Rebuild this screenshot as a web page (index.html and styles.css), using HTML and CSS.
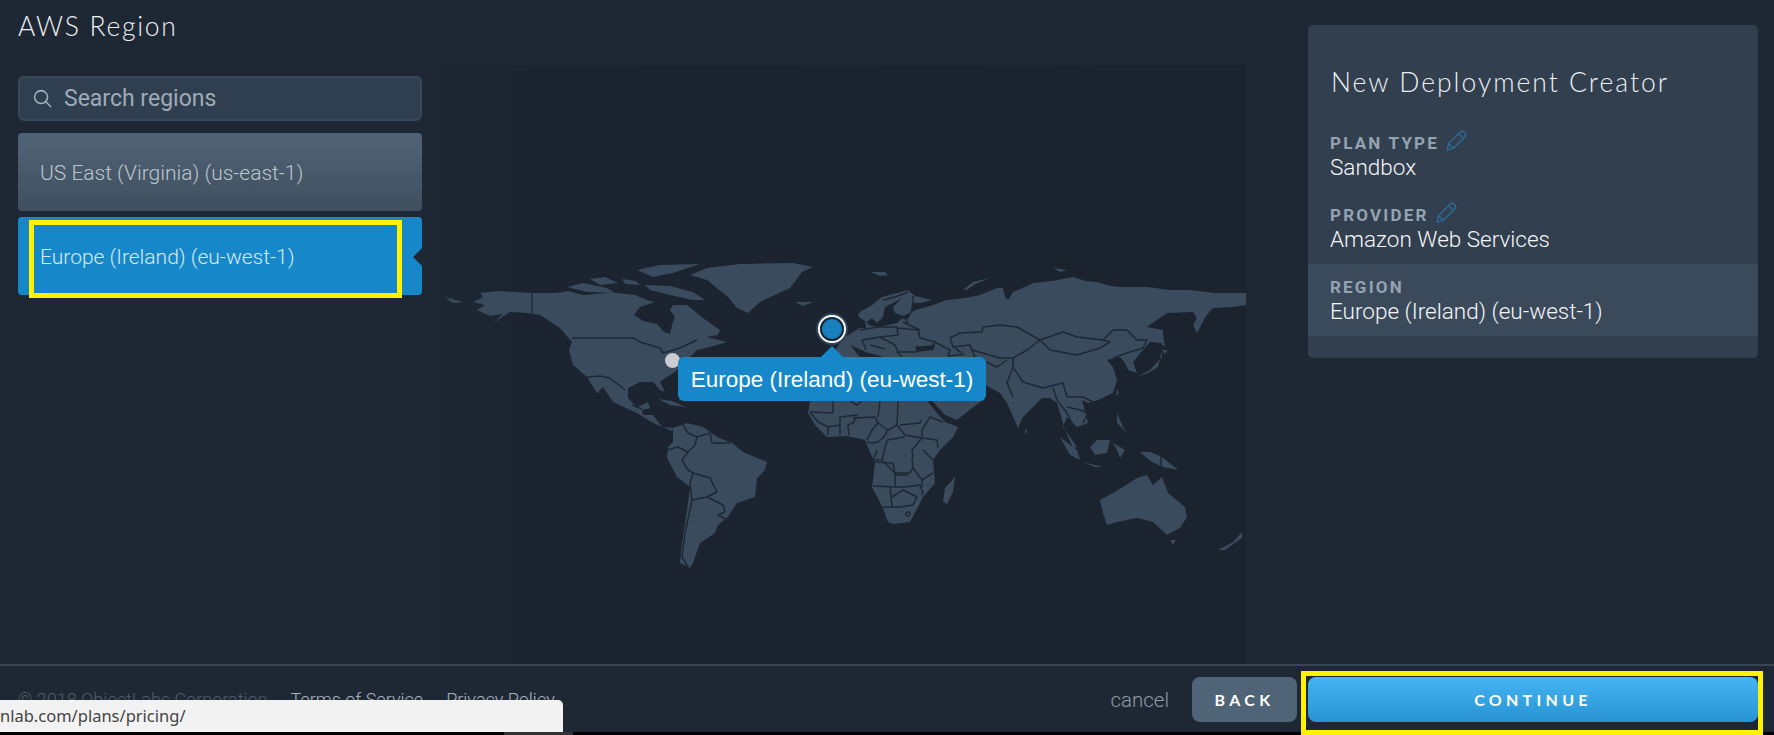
FILE: index.html
```html
<!DOCTYPE html>
<html lang="en">
<head>
    <meta charset="UTF-8">
    <meta name="viewport" content="width=device-width, initial-scale=1.0">
    <title>AWS Region</title>
    <link rel="stylesheet" href="styles.css">
</head>
<body>
    <div class="page">
        <main class="main">
            <section class="regions">
                <h1 class="regions-title">AWS Region</h1>
                <div class="search">
                    <svg class="search-icon" viewBox="0 0 20 20"><circle cx="8.5" cy="8.5" r="6.8"/><path d="M13.5 13.5L19 19"/></svg>
                    <span>Search regions</span>
                </div>
                <div class="region-item">US East (Virginia) (us-east-1)</div>
                <div class="region-item region-item-active">Europe (Ireland) (eu-west-1)</div>
            </section>

            <section class="map">
                <svg class="map-svg" viewBox="430 65 816 600">
                    <g class="land">
                        <!-- north america -->
                        <path d="M473 302L483 297L480 293L498 291L532 293L557 293L568 291L583 295L607 293L617 293L635 295L647 300L655 302L640 307L634 315L643 321L657 324L664 332L670 334L672 325L675 317L670 310L673 305L687 305L703 318L720 330L718 335L707 337L727 342L710 347L697 350L690 357L675 372L667 377L660 382L665 392L660 390L653 382L640 382L628 388L628 398L637 407L648 402L650 408L642 410L643 415L653 415L662 427L673 428L672 431L653 423L637 413L613 402L603 387L597 393L587 377L573 365L569 350L572 342L560 328L540 315L528 313L510 312L493 323L503 314L490 316L477 310L485 305Z"/>
                        <path d="M445 297L463 302L453 303Z"/>
                        <path d="M645 285L670 286L693 292L705 300L693 300L670 295L650 290Z"/>
                        <path d="M567 287L583 283L607 288L615 293L587 292Z"/>
                        <path d="M637 270L660 265L700 264L673 273L653 277Z"/>
                        <path d="M622 279L636 281L640 285L625 284Z"/>
                        <path d="M590 279L605 277L618 283L600 285Z"/>
                        <path d="M658 399L672 401L686 407L670 405Z"/>
                        <!-- greenland, iceland -->
                        <path d="M690 275L707 268L740 264L793 263L813 267L802 272L790 288L760 302L748 313L737 308L728 297L707 280Z"/>
                        <path d="M795 302L813 302L803 306Z"/>
                        <!-- south america -->
                        <path d="M673 428L687 423L703 427L717 437L732 443L743 452L767 462L765 470L757 478L755 497L737 503L727 518L718 525L715 533L700 543L693 563L690 568L680 563L682 543L688 503L690 487L677 477L667 458L668 447L673 442Z"/>
                        <!-- eurasia -->
                        <path d="M826 372L830 358L843 338L860 328L866 328L865 320L869 325L878 327L897 323L902 318L908 319L911 313L915 310L930 306L947 300L965 298L980 295L997 288L1003 288L1005 297L1008 300L1013 292L1025 287L1033 283L1052 281L1073 277L1085 281L1097 282L1110 286L1120 287L1147 287L1170 290L1190 290L1215 293L1230 293L1246 293L1246 305L1233 307L1213 308L1206 316L1197 333L1193 325L1197 318L1193 312L1167 313L1147 327L1163 330L1162 343L1150 342L1143 350L1133 362L1137 373L1128 370L1125 363L1120 357L1107 360L1113 367L1117 380L1113 393L1098 400L1088 403L1082 400L1088 423L1077 427L1067 417L1063 427L1077 447L1073 448L1065 430L1057 403L1050 398L1042 398L1023 417L1018 428L1007 403L1000 393L985 385L960 370L900 372Z"/>
                        <!-- scandinavia, finland -->
                        <path d="M858 315L860 312L872 305L882 297L897 293L908 290L915 296L932 300L922 303L913 303L912 312L903 316L895 313L893 307L902 298L893 303L885 307L883 317L877 323L872 318L867 322L860 318Z"/>
                        <!-- africa, arabia, madagascar -->
                        <path d="M812 365L860 362L928 370L928 402L937 413L945 422L958 427L953 437L940 450L933 460L935 483L923 497L918 507L910 522L893 524L888 522L883 508L872 487L873 480L875 462L872 457L865 440L847 436L827 437L815 425L808 413L810 401Z"/>
                        <path d="M925 370L985 385L983 400L972 408L957 420L945 415L933 402Z"/>
                        <path d="M955 477L945 488L943 502L947 504L953 492Z"/>
                        <!-- islands -->
                        <path d="M871 272L885 272L888 275L880 276Z"/>
                        <path d="M963 290L973 282L990 278L975 284L967 290Z"/>
                        <path d="M1053 268L1067 270L1060 272Z"/>
                        <path d="M1025 428L1027 432L1025 434Z"/>
                        <path d="M1060 437L1077 450L1080 460L1070 455Z"/>
                        <path d="M1083 462L1103 467L1095 467Z"/>
                        <path d="M1090 447L1097 440L1110 440L1107 453L1095 455Z"/>
                        <path d="M1113 443L1125 450L1120 458L1117 450Z"/>
                        <path d="M1117 413L1123 427L1127 433L1117 423Z"/>
                        <path d="M1140 452L1150 452L1162 457L1178 470L1163 467L1152 462L1143 455Z"/>
                        <path d="M1137 377L1150 370L1162 357L1162 351L1158 367L1148 373Z"/>
                        <path d="M1162 350L1168 350L1165 354Z"/>
                        <path d="M1162 328L1165 347L1162 345Z"/>
                        <path d="M1117 389L1119 393L1116 396Z"/>
                        <!-- australia, nz -->
                        <path d="M1100 500L1113 493L1123 487L1137 478L1147 475L1153 485L1162 477L1168 493L1185 507L1187 517L1180 528L1167 535L1153 522L1137 518L1117 522L1107 525L1103 513Z"/>
                        <path d="M1170 540L1176 540L1173 545Z"/>
                        <path d="M1242 532L1233 542L1218 550L1225 550L1242 538Z"/>
                    </g>
                    <g class="water">
                        <!-- black sea, caspian, med -->
                        <path d="M915 347L935 345L933 350L917 352Z"/>
                        <path d="M952 345L963 353L958 352Z"/>
                        <path d="M850 345L866 352L884 357L860 357Z"/>
                    </g>
                    <g class="borders">
                        <!-- canada/us -->
                        <path d="M532 293V313"/>
                        <path d="M572 338L634 338L640 342L660 348L663 353L680 348L697 340"/>
                        <path d="M587 377L600 376L610 378L625 390"/>
                        <path d="M632 405L642 409"/>
                        <!-- south america -->
                        <path d="M682 423L688 433L697 437L695 445L688 452L682 460L688 470L693 473L690 483L692 500L685 533L682 557L688 567"/>
                        <path d="M693 473L710 478L717 492L707 497L692 500"/>
                        <path d="M707 497L723 505L725 512L718 515L727 520"/>
                        <path d="M697 437L710 433L712 443L730 443"/>
                        <path d="M667 450L678 447L688 452"/>
                        <!-- europe -->
                        <path d="M860 330L878 327L897 327L898 335L880 337L862 340L866 350"/>
                        <path d="M897 328L918 330L920 338L935 342L932 347L917 347L917 352L897 352L905 360"/>
                        <path d="M903 322L920 330"/>
                        <path d="M898 318L905 318L908 323"/>
                        <path d="M913 296L913 303L911 313"/>
                        <path d="M883 300L895 297L908 292"/>
                        <path d="M880 337L895 345L898 352M870 345L885 349"/>
                        <path d="M935 342L950 350L948 356L965 354"/>
                        <!-- asia -->
                        <path d="M950 338L960 333L982 332L983 327L1000 325L1017 327L1040 340L1063 332L1077 337L1103 340L1113 330L1127 330L1137 340L1147 340L1143 348L1127 353L1113 358"/>
                        <path d="M1040 340L1050 350L1077 355L1100 348L1110 342L1103 340"/>
                        <path d="M950 338L953 347L970 345L972 350L1000 358L1013 358L1027 350L1040 340"/>
                        <path d="M972 350L975 357L997 367L1007 360"/>
                        <path d="M1013 358L1013 367L1007 383L1013 397"/>
                        <path d="M1013 367L1023 382L1043 388L1063 383L1067 397"/>
                        <path d="M1053 388L1057 400L1067 413L1072 423"/>
                        <path d="M1067 397L1083 397L1093 402"/>
                        <path d="M1067 407L1080 410L1088 413L1083 423"/>
                        <!-- africa -->
                        <path d="M833 401V413L810 412"/>
                        <path d="M810 412L818 422L828 427L840 425V417L857 415L853 423L848 425L849 435"/>
                        <path d="M828 427V435M840 425V435"/>
                        <path d="M853 418L875 417L878 423L872 430L867 440"/>
                        <path d="M878 423L888 430L883 438L878 442L872 443L867 442"/>
                        <path d="M888 430L897 425L898 401M880 401L878 417"/>
                        <path d="M850 401L857 405L862 401"/>
                        <path d="M897 425L905 435L922 438L922 430L930 417L943 422"/>
                        <path d="M900 425L920 423L921 420"/>
                        <path d="M922 438L937 440L938 448"/>
                        <path d="M922 438L912 450L913 458"/>
                        <path d="M923 450L933 460"/>
                        <path d="M887 440L905 437"/>
                        <path d="M887 440L882 460L873 460L877 450"/>
                        <path d="M882 460L895 473L910 473L913 468L912 458"/>
                        <path d="M913 468L922 480L933 473"/>
                        <path d="M873 462L893 463L895 475L908 475"/>
                        <path d="M895 475V487L873 486"/>
                        <path d="M895 487H905L920 485L923 493L921 495"/>
                        <path d="M922 480V487"/>
                        <path d="M890 487L892 507L883 507"/>
                        <path d="M892 497L903 490L917 497L913 505L900 507L892 507"/>
                        <circle cx="908" cy="514" r="2"/>
                        <!-- papua -->
                        <path d="M1161 453V467"/>
                    </g>
                </svg>
                <span class="pin"></span>
                <span class="pin-active"></span>
                <div class="tooltip">Europe (Ireland) (eu-west-1)</div>
            </section>

            <aside class="summary">
                <h2 class="summary-title">New Deployment Creator</h2>
                <div class="summary-row">
                    <div class="summary-label">PLAN TYPE
                        <svg class="pencil" viewBox="0 0 20 20"><path d="M1 19L2.5 13L13.5 2L16 1L19 4L18 6.5L7 17.5ZM2.5 13L7 17.5M12 3.5L16.5 8"/></svg>
                    </div>
                    <div class="summary-value">Sandbox</div>
                </div>
                <div class="summary-row">
                    <div class="summary-label">PROVIDER
                        <svg class="pencil" viewBox="0 0 20 20"><path d="M1 19L2.5 13L13.5 2L16 1L19 4L18 6.5L7 17.5ZM2.5 13L7 17.5M12 3.5L16.5 8"/></svg>
                    </div>
                    <div class="summary-value">Amazon Web Services</div>
                </div>
                <div class="summary-row summary-row-current">
                    <div class="summary-label">REGION</div>
                    <div class="summary-value">Europe (Ireland) (eu-west-1)</div>
                </div>
            </aside>
        </main>

        <footer class="footer">
            <div class="footer-links">
                <span class="copyright">© 2018 ObjectLabs Corporation</span>
                <a>Terms of Service</a>
                <a>Privacy Policy</a>
            </div>
            <div class="footer-actions">
                <a class="cancel">cancel</a>
                <button class="btn btn-back">BACK</button>
                <button class="btn btn-continue">CONTINUE</button>
            </div>
        </footer>

        <div class="mark mark-region"></div>
        <div class="mark mark-continue"></div>
        <div class="taskbar"><span></span></div>
        <div class="status-bar">nlab.com/plans/pricing/</div>
    </div>
</body>
</html>
```

FILE: styles.css
```css
* {
    box-sizing: border-box;
}

html, body {
    margin: 0;
    padding: 0;
    height: 100%;
}

body {
    font-family: Roboto, sans-serif;
    background-color: #1e2835;
    overflow: hidden;
}

.page {
    position: relative;
    width: 1774px;
    height: 735px;
    display: flex;
    flex-direction: column;
    overflow: hidden;
}

.main {
    display: flex;
    height: 664px;
    padding-left: 18px;
}

/* left column */
.regions {
    width: 404px;
    flex-shrink: 0;
}

.regions-title {
    margin: 0 0 24px;
    height: 52px;
    line-height: 52px;
    font-family: Lato, sans-serif;
    font-weight: 300;
    font-size: 26.5px;
    letter-spacing: 1.7px;
    color: #eceff2;
}

.search {
    display: flex;
    align-items: center;
    gap: 12px;
    height: 45px;
    padding-left: 13px;
    margin-bottom: 12px;
    background-color: #2f3f4f;
    border: 2px solid #374859;
    border-radius: 6px;
    color: #9eabb7;
    font-size: 23px;
    font-weight: 400;
}

.search-icon {
    width: 19px;
    height: 19px;
    fill: none;
    stroke: #a3afba;
    stroke-width: 1.6;
}

.region-item {
    position: relative;
    display: flex;
    align-items: center;
    height: 78px;
    padding: 1px 0 0 22px;
    margin-bottom: 6px;
    background: linear-gradient(#506375, #3f4f60);
    border-radius: 4px;
    color: #bcc5cd;
    font-size: 21px;
    font-weight: 300;
}

.region-item-active {
    background: #1688ca;
    color: #d6e8f4;
}

.region-item-active::after {
    content: "";
    position: absolute;
    right: 0;
    top: 31px;
    border: 9px solid transparent;
    border-left-width: 0;
    border-right-color: #1e2835;
}

/* map */
.map {
    position: relative;
    width: 816px;
    height: 599px;
    margin: 65px 0 0 8px;
    flex-shrink: 0;
    overflow: hidden;
    background: linear-gradient(to right, #1e2835, #1b2430 12%, #1a232e);
}

.map-svg {
    display: block;
    width: 816px;
    height: 600px;
}

.land {
    fill: #3a4b5d;
}

.water {
    fill: #1b2430;
}

.borders {
    fill: none;
    stroke: #1e2835;
    stroke-width: 1.5;
    stroke-linejoin: round;
}

.pin {
    position: absolute;
    left: 235px;
    top: 288px;
    width: 15px;
    height: 15px;
    border-radius: 50%;
    background-color: #c9ccd0;
}

.pin-active {
    position: absolute;
    left: 388px;
    top: 250px;
    width: 28px;
    height: 28px;
    border-radius: 50%;
    background-color: #1a7fbd;
    border: 2px solid #fff;
    box-shadow: 0 0 0 2px #344454;
    outline: 2px solid #1e2835;
    outline-offset: -4px;
}

.tooltip {
    position: absolute;
    left: 248px;
    top: 292px;
    width: 308px;
    height: 44px;
    line-height: 46px;
    text-align: center;
    background-color: #1688ca;
    border-radius: 6px;
    color: #fff;
    font-family: "Liberation Sans", sans-serif;
    font-size: 22.5px;
}

.tooltip::before {
    content: "";
    position: absolute;
    left: 143px;
    top: -11px;
    border: 11px solid transparent;
    border-top-width: 0;
    border-bottom-color: #1688ca;
}

/* summary card */
.summary {
    width: 450px;
    height: 333px;
    margin: 25px 0 0 62px;
    padding-top: 40px;
    background-color: #323f4e;
    border-radius: 5px;
    flex-shrink: 0;
}

.summary-title {
    margin: 0 0 21px;
    padding-left: 23px;
    font-family: Lato, sans-serif;
    font-weight: 300;
    font-size: 26.5px;
    line-height: 34px;
    letter-spacing: 2px;
    color: #eceff2;
}

.summary-row {
    height: 72px;
    padding: 12px 0 0 22px;
}

.summary-row-current {
    background-color: #3a4a5b;
}

.summary-label {
    display: flex;
    align-items: center;
    gap: 7px;
    height: 22px;
    font-size: 17px;
    font-weight: 700;
    letter-spacing: 2.2px;
    color: #95a3b2;
}

.summary-value {
    font-size: 22.5px;
    font-weight: 300;
    line-height: 26px;
    color: #f4f6f8;
}

.pencil {
    width: 21px;
    height: 21px;
    margin-top: -5px;
    fill: none;
    stroke: #2d6a94;
    stroke-width: 1.4;
    stroke-linejoin: round;
}

/* footer */
.footer {
    display: flex;
    justify-content: space-between;
    height: 71px;
    padding: 11px 16px 0 18px;
    border-top: 2px solid #3a4654;
}

.footer-links {
    display: flex;
    align-items: center;
    gap: 23px;
    height: 45px;
    font-size: 18px;
    font-weight: 300;
    color: #a9b3bd;
}

.copyright {
    color: #4f5c6a;
}

.footer-actions {
    display: flex;
    align-items: center;
    height: 45px;
}

.cancel {
    margin-right: 23px;
    font-size: 20.5px;
    font-weight: 300;
    color: #8f9aa5;
}

.btn {
    height: 45px;
    border: none;
    border-radius: 8px;
    color: #fff;
    font-family: Lato, sans-serif;
    font-size: 16px;
    font-weight: 700;
    letter-spacing: 4.3px;
}

.btn-back {
    width: 105px;
    margin-right: 11px;
    background-color: #506477;
}

.btn-continue {
    width: 450px;
    background: linear-gradient(#45b4f2, #2793d3);
}

/* yellow annotation boxes */
.mark {
    position: absolute;
    border: 5px solid #fff200;
}

.mark-region {
    left: 29px;
    top: 220px;
    width: 373px;
    height: 78px;
}

.mark-continue {
    left: 1301px;
    top: 671px;
    width: 462px;
    height: 64px;
    z-index: 2;
}

/* browser chrome */
.taskbar {
    position: absolute;
    left: 0;
    right: 0;
    bottom: 0;
    height: 3px;
    background-color: #000;
}

.taskbar span {
    display: block;
    width: 69px;
    height: 3px;
    margin-left: 504px;
    background-color: #333;
}

.status-bar {
    position: absolute;
    left: 0;
    top: 700px;
    width: 563px;
    height: 32px;
    line-height: 31px;
    background-color: #f2f2f2;
    border-top-right-radius: 5px;
    color: #444;
    font-family: "Noto Sans", sans-serif;
    font-size: 16.5px;
}
```
